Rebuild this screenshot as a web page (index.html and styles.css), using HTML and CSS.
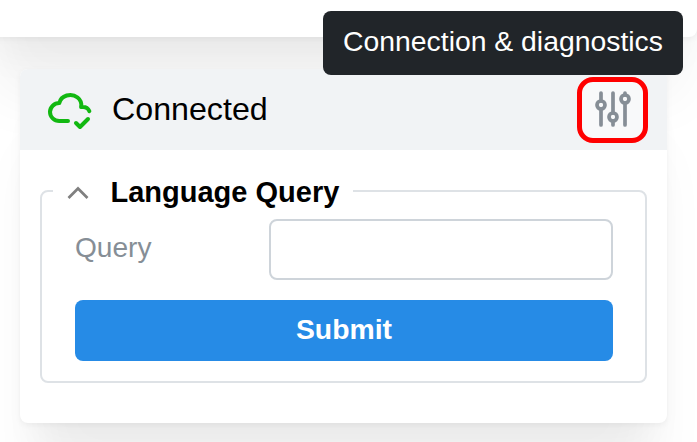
FILE: index.html
```html
<!DOCTYPE html>
<html lang="en">
<head>
<meta charset="utf-8">
<title>Connection</title>
<link rel="stylesheet" href="styles.css">
</head>
<body>
<div class="topbar"></div>
<section class="card">
  <header class="card-header">
    <svg class="icon status-icon" viewBox="0 0 24 24"><path d="M11 18.004h-4.343c-2.572 -.004 -4.657 -2.011 -4.657 -4.487c0 -2.475 2.085 -4.482 4.657 -4.482c.393 -1.762 1.794 -3.2 3.675 -3.773c1.88 -.572 3.956 -.193 5.444 1c1.488 1.19 2.162 3.007 1.77 4.769h.99c1.388 0 2.585 .82 3.138 2.007"/><path d="M15 19l2 2l4 -4"/></svg>
    <span class="status">Connected</span>
    <button class="settings" aria-label="Settings">
      <svg class="icon" viewBox="0 0 24 24"><circle cx="6" cy="10" r="2"/><path d="M6 4v4M6 12v8"/><circle cx="12" cy="16" r="2"/><path d="M12 4v10M12 18v2"/><circle cx="18" cy="7" r="2"/><path d="M18 4v1M18 9v11"/></svg>
    </button>
    <div class="tooltip">Connection &amp; diagnostics</div>
  </header>
  <div class="card-body">
    <fieldset class="group">
      <legend class="legend">
        <svg class="chevron" viewBox="0 0 24 16"><path d="M2.5 13L12 3.5L21.5 13"/></svg>
        <span>Language Query</span>
      </legend>
      <div class="form">
        <div class="row">
          <label class="label" for="query">Query</label>
          <input class="input" id="query" type="text">
        </div>
        <button class="submit">Submit</button>
      </div>
    </fieldset>
  </div>
</section>
</body>
</html>
```
FILE: styles.css
```css
* { box-sizing: border-box; }

html { overflow: hidden; }

body {
  display: flow-root;
  margin: 0;
  height: 442px;
  overflow: hidden;
  background: #fff;
  color: #000;
  font-family: "Liberation Sans", Arial, sans-serif;
  font-size: 28.35px;
}

.topbar,
.card {
  background: #fff;
  box-shadow: 0 2px 6px rgba(0, 0, 0, .05),
    0 72px 56px -14px rgba(0, 0, 0, .05),
    0 34px 34px -14px rgba(0, 0, 0, .04);
}

/* Extends above the window so its shadow is cast at full strength. */
.topbar {
  height: 237px;
  margin: -200px 0 0 -20px;
  border-radius: 0 0 8px 8px;
}

.card {
  width: 647px;
  height: 354px;
  margin: 32px 0 0 20px;
  border-radius: 8px;
}

.card-header {
  position: relative;
  display: flex;
  align-items: center;
  height: 81px;
  padding: 0 19px 0 26px;
  border-radius: 8px 8px 0 0;
  background: #f1f3f5;
}

.icon {
  display: block;
  width: 48px;
  height: 48px;
  fill: none;
  stroke: #868e96;
  stroke-width: 1.85;
  stroke-linecap: round;
  stroke-linejoin: round;
}

.status-icon {
  margin-bottom: 1px;
  stroke: #12b811;
  stroke-width: 2;
}

.status {
  margin: 0 0 2px 18px;
  font-size: 32.2px;
  line-height: 40px;
}

.settings {
  display: grid;
  place-items: center;
  width: 71px;
  height: 66px;
  margin-left: auto;
  padding: 0 0 1px;
  border: 5px solid #f00;
  border-radius: 16px;
  background: #f8f9fa;
}

.tooltip {
  position: absolute;
  right: -16px;
  bottom: 75px;
  width: 360px;
  height: 64px;
  border-radius: 8px;
  background: #212529;
  color: #fff;
  line-height: 61px;
  text-align: center;
  white-space: nowrap;
}

.card-body { padding: 19px 20px; }

.group {
  height: 214px;
  margin: 0;
  padding: 0 11px;
  border: 2px solid #dee2e6;
  border-radius: 8px;
}

.legend {
  display: flex;
  align-items: center;
  gap: 21px;
  height: 44px;
  padding: 2px 14px 0 12.5px;
  font-size: 29px;
  font-weight: 700;
}

.chevron {
  width: 24px;
  height: 16px;
  margin-top: 2px;
  fill: none;
  stroke: #808080;
  stroke-width: 2.7;
}

.form { padding: 6px 21px 0 22px; }

.row {
  display: flex;
  justify-content: space-between;
}

.label {
  color: #868e96;
  font-size: 28.1px;
  line-height: 58px;
}

.input {
  width: 344px;
  height: 61px;
  padding: 0 20px;
  border: 2px solid #ced4da;
  border-radius: 8px;
  background: #fff;
  font: inherit;
}

.submit {
  display: block;
  width: 100%;
  height: 61px;
  margin-top: 20px;
  padding: 0 0 2px;
  border: 0;
  border-radius: 8px;
  background: #268be6;
  color: #fff;
  font: 700 28.35px "Liberation Sans", Arial, sans-serif;
}
```
